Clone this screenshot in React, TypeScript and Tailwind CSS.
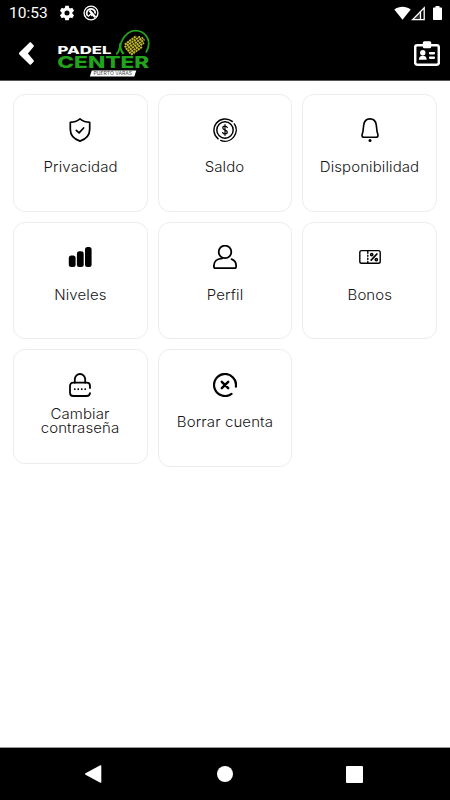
import React from 'react';

interface MenuItem {
  label: string;
  icon: React.ReactNode;
  twoLines?: boolean;
}

interface IconProps {
  children: React.ReactNode;
  strokeWidth?: number;
}

function LineIcon({ children, strokeWidth = 1.7 }: IconProps) {
  return (
    <svg
      viewBox="0 0 24 24"
      className="w-6 h-6 shrink-0"
      fill="none"
      stroke="#000"
      strokeWidth={strokeWidth}
      strokeLinecap="round"
      strokeLinejoin="round"
    >
      {children}
    </svg>
  );
}

const shieldIcon = (
  <LineIcon>
    <path d="M12 .9C9.200 3.200 5.800 4.300 2.300 4.300v7c0 5.300 3.700 9.900 9.700 11.800 6-1.900 9.700-6.500 9.700-11.800v-7C18.200 4.300 14.800 3.200 12 .9z" />
    <path d="M8.300 12.300l2.800 2.600 4.500-4.900" />
  </LineIcon>
);

const coinIcon = (
  <LineIcon strokeWidth={1.45}>
    <circle cx="12" cy="12" r="8.200" />
    <path d="M5.100 20.830A11.200 11.200 0 1 1 19.200 3.420M21.390 5.900A11.200 11.200 0 0 1 7.800 22.380" />
    <path d="M12 6.700v10.600M14.300 9.500c-.5-1-1.200-1.300-2.300-1.300-1.400 0-2.200.7-2.200 1.800 0 2.800 4.500 1.400 4.500 4.100 0 1.100-.9 1.900-2.300 1.900-1.300 0-2.100-.6-2.400-1.500" strokeWidth="1.200" />
  </LineIcon>
);

const bellIcon = (
  <LineIcon strokeWidth={1.6}>
    <path d="M12 .9c-3.700 0-5.900 2.400-6.300 6.300L5 13.200c-.2 1.700-1 2.600-1 4 0 1.300.8 2.100 2.100 2.100h11.800c1.300 0 2.100-.8 2.100-2.100 0-1.400-.8-2.300-1-4l-.7-6C17.900 3.300 15.700.9 12 .9z" />
    <circle cx="12" cy="22.400" r="1.500" fill="#000" stroke="none" />
  </LineIcon>
);

const levelsIcon = (
  <svg viewBox="0 0 24 24" className="w-6 h-6 shrink-0">
    <rect x=".8" y="10.600" width="6.800" height="11.400" rx="2.500" />
    <rect x="8.900" y="6.200" width="6.800" height="15.800" rx="2.500" />
    <rect x="17" y="2" width="6.600" height="20" rx="2.500" />
  </svg>
);

const userIcon = (
  <LineIcon strokeWidth={1.8}>
    <circle cx="12" cy="6.900" r="6.300" />
    <path d="M9.300 13.400C4.300 13.700.9 16.500.9 20.500v1.300c0 .8.600 1.400 1.400 1.400h19.400c.8 0 1.400-.6 1.400-1.400v-1.300c0-3-1.600-5.200-4.500-6.300" />
  </LineIcon>
);

const voucherIcon = (
  <LineIcon strokeWidth={1.4}>
    <rect x="1.800" y="5.600" width="20.400" height="12.700" rx="1.800" />
    <path d="M9.800 6v2.200M9.800 10.200v1.100M9.800 13.300v1.300M9.800 16.500v1.500" />
    <path d="M18.900 9l-5.700 6.100" strokeWidth="1.700" />
    <circle cx="13.700" cy="9.600" r="1.100" strokeWidth="1.500" />
    <circle cx="18.300" cy="14.600" r="1.100" strokeWidth="1.500" />
  </LineIcon>
);

const lockIcon = (
  <LineIcon strokeWidth={1.8}>
    <path d="M6.800 9.700V6.200a5.200 5.200 0 0 1 10.400 0v3.500" />
    <path d="M22 15v-2c0-2.200-1.200-3.300-3.300-3.300H5.300C3.200 9.700 2 10.800 2 13v6.700c0 2.200 1.200 3.300 3.300 3.300h13.400c2 0 3.100-.9 3.300-2.800" />
    <path d="M6.700 16.200h.1M10.200 16.200h.1M13.700 16.200h.1M17.200 16.200h.1" strokeWidth="1.700" />
  </LineIcon>
);

const deleteIcon = (
  <LineIcon strokeWidth={2.200}>
    <path d="M18.500 20.900A11 11 0 1 1 22.900 13.700" />
    <path d="M8.800 8.800l6.400 6.400M15.200 8.800l-6.400 6.400" strokeWidth="2.400" />
  </LineIcon>
);

const menuItems: MenuItem[] = [
  { label: 'Privacidad', icon: shieldIcon },
  { label: 'Saldo', icon: coinIcon },
  { label: 'Disponibilidad', icon: bellIcon },
  { label: 'Niveles', icon: levelsIcon },
  { label: 'Perfil', icon: userIcon },
  { label: 'Bonos', icon: voucherIcon },
  { label: 'Cambiar contraseña', icon: lockIcon, twoLines: true },
  { label: 'Borrar cuenta', icon: deleteIcon },
];

function StatusBar() {
  return (
    <div className="h-[27px] pl-[9px] pr-[8px] flex items-center justify-between text-white">
      <div className="flex items-center">
        <span className="w-[50px] pt-px font-[Roboto,sans-serif] text-[15.500px] leading-none">10:53</span>
        <svg viewBox="0 0 24 24" className="w-4 h-4 -mt-px" fill="#fff">
          <path
            fillRule="evenodd"
            d="M9.300 1h5.400l.5 3.200 1.700 1 3-1.200 2.700 4.600-2.500 2.100v2.600l2.500 2.100-2.700 4.600-3-1.200-1.700 1-.5 3.200H9.300l-.5-3.200-1.700-1-3 1.200-2.700-4.600 2.500-2.100v-2.600L1.400 8.600 4.100 4l3 1.200 1.700-1zM12 8.200a3.800 3.800 0 1 0 0 7.600 3.800 3.800 0 0 0 0-7.600z"
          />
        </svg>
        <svg viewBox="0 0 16 16" className="w-4 h-4 ml-2 -mt-px" fill="none" stroke="#fff">
          <circle cx="8" cy="8" r="6.900" strokeWidth="1.400" />
          <path d="M4.700 11A4.300 4.300 0 1 1 12.200 8.600" strokeWidth="1.800" />
          <path d="M6.500 5.500l5.800 6.700" strokeWidth="2.300" />
          <path d="M5 11.600l2.800-2.400 1.500 1.800" strokeWidth="1.300" />
        </svg>
      </div>
      <div className="flex items-center -mt-px">
        <svg viewBox="0 0 17 14" className="w-[17px] h-[14px]" fill="#fff">
          <path d="M8.500 13.800L.3 3.500C5.200-.3 11.800-.3 16.700 3.500z" />
        </svg>
        <svg viewBox="0 0 15 15" className="w-[15px] h-[15px]" fill="none" stroke="#fff" strokeWidth="1.300">
          <path d="M1.500 13.700L13.200 1.800v11.900z" />
          <path d="M9.500 5.600v8" />
          <path d="M9.500 13.700V5.500L2 13.700z" fill="#fff" fillOpacity=".2" stroke="none" />
        </svg>
        <svg viewBox="0 0 9 14" className="w-[9px] h-[14px] ml-[7px]" fill="#fff">
          <path d="M2.500 0h4v1.500H8c.6 0 1 .4 1 1V13c0 .6-.4 1-1 1H1c-.6 0-1-.4-1-1V2.500c0-.6.4-1 1-1h1.500z" />
        </svg>
      </div>
    </div>
  );
}

function Logo() {
  return (
    <svg viewBox="56 28 96 50" className="w-24 h-[50px] ml-[22px] mt-px">
      {/* racket */}
      <path
        d="M116.300 54.300c4-3.500 3-8.700 5.700-13.700 3.200-6.300 8-10.300 14-10 7.500.4 13 6.400 12.700 13.300-.1 3.400-1.100 6-2.800 8.500"
        fill="none"
        stroke="#22a31c"
        strokeWidth="1.800"
      />
      <path d="M120.300 43.500c-.6 4 .5 7 3.200 10.500" fill="none" stroke="#22a31c" strokeWidth="2.200" />
      {/* strings */}
      <g fill="none" stroke="#c4b92b" strokeWidth="2" strokeDasharray="2.200 .6">
        <path d="M124.800 44.500l11.500-8.500M124.600 47.300l15.400-10.800M125.700 49.500l17.300-12M127.500 51.200l17-11.800M129 53.200l15-10.500M131 54.700l11.500-8" />
      </g>
      <text
        x="57.500"
        y="54.200"
        textLength="54"
        lengthAdjust="spacingAndGlyphs"
        fill="#fff"
        className="font-[Inter,sans-serif] font-extrabold text-[11px]"
      >
        PADEL
      </text>
      <text
        x="57.300"
        y="68.100"
        textLength="92"
        lengthAdjust="spacingAndGlyphs"
        fill="#22a31c"
        className="font-[Inter,sans-serif] font-extrabold text-[16px]"
      >
        CENTER
      </text>
      <path d="M91.800 70.500h44.500l-2 6H89.800z" fill="#fff" />
      <text
        x="93.500"
        y="75.200"
        textLength="38.500"
        lengthAdjust="spacingAndGlyphs"
        fill="#444"
        className="font-[Inter,sans-serif] text-[4.600px]"
      >
        PUERTO VARAS
      </text>
    </svg>
  );
}

function Header() {
  return (
    <header className="h-[54px] flex items-start justify-between pl-[19px] pr-[10px] border-b border-[#555] text-white">
      <div className="flex items-start">
        <svg viewBox="0 0 15 23" className="w-[15px] h-[23px] mt-[15px]" fill="#fff">
          <path d="M.4 10.600L10.600.6c.5-.5 1-.5 1.400 0l2.600 2.700c.4.500.4 1 0 1.400L8.900 11.500l5.700 6.800c.4.500.4 1 0 1.400L12 22.400c-.4.500-.9.500-1.400 0L.4 12.400c-.6-.6-.6-1.200 0-1.800z" />
        </svg>
        <Logo />
      </div>
      <svg viewBox="0 0 26 26" className="w-[26px] h-[26px] mt-[14px]" fill="#fff">
        <rect x="1.200" y="4.200" width="23.600" height="19.600" rx="2" fill="none" stroke="#fff" strokeWidth="2.500" />
        <rect x="8.800" y=".3" width="8.400" height="7" rx="1.500" />
        <circle cx="8.800" cy="11.700" r="2.700" />
        <path d="M4.900 18.700c0-2.700 1.400-3.900 3.900-3.900s3.900 1.200 3.900 3.900z" />
        <rect x="15" y="11" width="6" height="2.400" rx=".8" />
        <rect x="15" y="15.500" width="6" height="2.400" rx=".8" />
      </svg>
    </header>
  );
}

function MenuCard({ item }: { item: MenuItem }) {
  return (
    <button
      className={`flex flex-col items-center pt-[22.500px] rounded-[12px] border border-[#ededed] bg-white ${
        item.twoLines ? 'h-[114.500px] gap-[10px]' : 'h-[117.500px] gap-[18.500px]'
      }`}
    >
      {item.icon}
      <span
        className={`font-[Inter,sans-serif] font-light text-[14px] leading-[14px] tracking-[0.100px] scale-x-107 text-[#151515] ${
          item.twoLines ? 'w-[80px]' : 'whitespace-nowrap'
        }`}
      >
        {item.label}
      </span>
    </button>
  );
}

function NavigationBar() {
  return (
    <nav className="h-[53px] bg-black border-t border-[#999] flex items-center justify-between pl-[85px] pr-[87px]">
      <svg viewBox="0 0 17 18" className="w-[17px] h-[18px]" fill="#fff">
        <path d="M.5 8.300L15.300.3c.5-.3 1 0 1 .5v16.400c0 .5-.5.800-1 .5L.5 9.700c-.6-.4-.6-1 0-1.400z" />
      </svg>
      <div className="w-4 h-4 ml-[2px] rounded-full bg-white" />
      <div className="w-[17px] h-[17px] rounded-[1px] bg-white" />
    </nav>
  );
}

export default function App() {
  return (
    <div className="w-[450px] h-[800px] flex flex-col bg-white overflow-hidden">
      <div className="bg-black">
        <StatusBar />
        <Header />
      </div>
      <main className="flex-1 px-[13px] pt-[13px]">
        <div className="grid grid-cols-3 gap-[10px] items-start">
          {menuItems.map((item) => (
            <MenuCard key={item.label} item={item} />
          ))}
        </div>
      </main>
      <NavigationBar />
    </div>
  );
}
